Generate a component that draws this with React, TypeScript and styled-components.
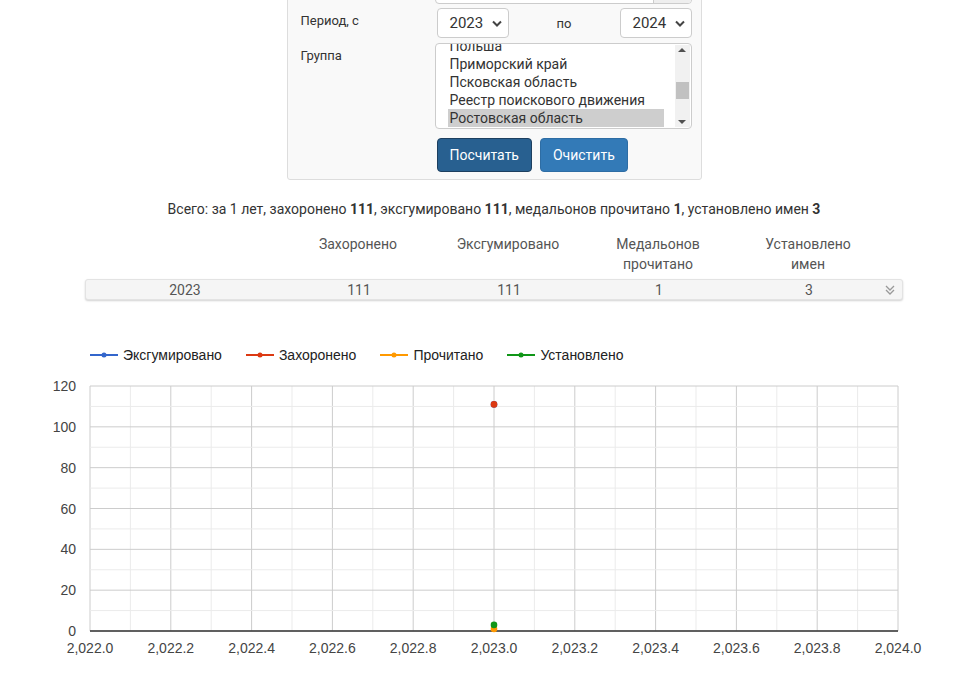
import React from 'react';
import styled, { createGlobalStyle } from 'styled-components';

const GlobalStyle = createGlobalStyle`
  html, body {
    margin: 0;
    padding: 0;
    background: #fff;
    overflow: hidden;
  }
  body {
    font-family: Roboto, "Noto Sans", sans-serif;
    color: #333;
  }
`;

const Page = styled.div`
  width: 818px;
  margin-left: 85px;
  display: flex;
  flex-direction: column;
`;

const Panel = styled.div`
  align-self: center;
  width: 415px;
  box-sizing: border-box;
  margin-top: -43px;
  padding: 10px 9px 7px 13px;
  background: #f9f9f9;
  border: 1px solid #ddd;
  border-radius: 3px;
  display: flex;
  flex-direction: column;
  gap: 4px;
`;

const FormRow = styled.div<{ $gap?: number }>`
  display: grid;
  grid-template-columns: 134px 1fr;
  align-items: start;
  margin-top: ${(p) => p.$gap ?? 0}px;
`;

const Label = styled.div`
  font-size: 13px;
  color: #333;
  padding-top: 5px;
`;

const InputGroup = styled.div`
  display: flex;
  height: 34px;
  border: 1px solid #ccc;
  border-radius: 4px;
  background: #fff;
  overflow: hidden;
`;

const InputField = styled.div`
  flex: 1;
`;

const Addon = styled.div`
  width: 37px;
  background: #eee;
  border-left: 1px solid #ccc;
`;

const PeriodControls = styled.div`
  display: flex;
  align-items: center;
  padding-left: 2px;
`;

const SelectBox = styled.div`
  width: 72px;
  height: 30px;
  box-sizing: border-box;
  border: 1px solid #ccc;
  border-radius: 4px;
  background: #fff;
  display: flex;
  align-items: center;
  justify-content: space-between;
  padding: 0 6px 0 12px;
  font-size: 15px;
  color: #333;
`;

const Po = styled.div`
  flex: 1;
  text-align: center;
  font-size: 13px;
  color: #333;
`;

const ListBox = styled.div`
  height: 86px;
  box-sizing: border-box;
  border: 1px solid #ccc;
  border-radius: 4px;
  background: #fff;
  display: flex;
  overflow: hidden;
`;

const ListItems = styled.div`
  flex: 1;
  padding: 0 11px 0 12px;
  margin-top: -7px;
`;

const ListItem = styled.div<{ $selected?: boolean }>`
  height: 18px;
  line-height: 18px;
  padding-left: 2px;
  font-size: 14px;
  color: #333;
  background: ${(p) => (p.$selected ? '#cecece' : 'transparent')};
`;

const ScrollTrack = styled.div`
  width: 15px;
  margin: 1px 1px 1px 0;
  background: #f1f1f1;
  display: flex;
  flex-direction: column;
  align-items: center;
  justify-content: space-between;
  padding: 3px 0;
  box-sizing: border-box;
`;

const ScrollThumb = styled.div`
  width: 13px;
  height: 17px;
  background: #c1c1c1;
  margin-top: 30px;
`;

const Arrow = styled.div<{ $up?: boolean }>`
  width: 0;
  height: 0;
  border-left: 4px solid transparent;
  border-right: 4px solid transparent;
  ${(p) => (p.$up ? 'border-bottom: 4px solid #505050;' : 'border-top: 4px solid #505050;')}
`;

const Spacer = styled.div`
  flex: 1;
`;

const Buttons = styled.div`
  display: flex;
  gap: 8px;
  margin-top: 5px;
  padding-left: 2px;
`;

const Button = styled.button<{ $active?: boolean }>`
  height: 34px;
  padding: 0 12px;
  font-family: Roboto, "Noto Sans", sans-serif;
  font-size: 14px;
  color: #fff;
  border-radius: 4px;
  border: 1px solid ${(p) => (p.$active ? '#1d3f5f' : '#2e6da4')};
  background: ${(p) => (p.$active ? '#286090' : '#337ab7')};
  cursor: pointer;
`;

const Summary = styled.div`
  margin-top: 20px;
  text-align: center;
  font-size: 14px;
  color: #333;
  line-height: 18px;
`;

const ColumnsGrid = styled.div`
  display: grid;
  grid-template-columns: 198px repeat(4, 150px) 20px;
  align-items: center;
`;

const HeadRow = styled(ColumnsGrid)`
  margin-top: 16px;
  align-items: start;
`;

const HeadCell = styled.div`
  text-align: center;
  font-size: 14px;
  line-height: 20px;
  color: #555;
`;

const DataRow = styled(ColumnsGrid)`
  margin-top: 5px;
  height: 21px;
  box-sizing: border-box;
  background: #f5f5f5;
  border: 1px solid #e3e3e3;
  border-radius: 3px;
  box-shadow: 0 1px 2px rgba(0, 0, 0, 0.18);
`;

const DataCell = styled.div`
  text-align: center;
  font-size: 14px;
  color: #555;
`;

const Expand = styled.div`
  display: flex;
  align-items: center;
  justify-content: flex-start;
`;

const ChartSection = styled.div`
  margin-top: 45px;
  margin-left: -85px;
  width: 956px;
  display: flex;
  flex-direction: column;
`;

const Legend = styled.div`
  display: flex;
  gap: 24px;
  padding-left: 90px;
  height: 20px;
  align-items: center;
`;

const LegendItem = styled.div`
  display: flex;
  align-items: center;
  gap: 5px;
  font-family: "Liberation Sans", Arial, sans-serif;
  font-size: 14px;
  color: #222;
`;

const ChartSvg = styled.svg`
  display: block;
  margin-top: 11px;
`;

const series = [
  { name: 'Эксгумировано', color: '#3366cc' },
  { name: 'Захоронено', color: '#dc3912' },
  { name: 'Прочитано', color: '#ff9900' },
  { name: 'Установлено', color: '#109618' },
];

const groups = ['Польша', 'Приморский край', 'Псковская область', 'Реестр поискового движения', 'Ростовская область'];

// plot geometry (svg coords, svg top = page y 376)
const TOP = 376;
const X0 = 90;
const X1 = 898;
const Y0 = 631 - TOP;
const Y1 = 386 - TOP;
const xPos = (v: number) => X0 + ((v - 2022) / 2) * (X1 - X0);
const yPos = (v: number) => Y0 - (v / 120) * (Y0 - Y1);

const points = [
  { v: 111, color: '#3366cc' },
  { v: 111, color: '#dc3912' },
  { v: 1, color: '#ff9900' },
  { v: 3, color: '#109618' },
];

const Chevron = () => (
  <svg width="10" height="7" viewBox="0 0 10 7">
    <path d="M1 1.5 L5 5.5 L9 1.5" fill="none" stroke="#444" strokeWidth="2" />
  </svg>
);

const DoubleDown = () => (
  <svg width="12" height="12" viewBox="0 0 12 12">
    <path d="M2 2 L6 6 L10 2 M2 6 L6 10 L10 6" fill="none" stroke="#999" strokeWidth="1.3" />
  </svg>
);

const Chart = () => {
  const minorX = Array.from({ length: 21 }, (_, i) => 2022 + i * 0.1);
  const minorY = Array.from({ length: 13 }, (_, i) => i * 10);
  return (
    <ChartSvg width={956} height={290}>
      {minorX.map((v, i) => (
        <line key={'x' + i} x1={xPos(v)} x2={xPos(v)} y1={Y1} y2={Y0} stroke={i % 2 ? '#ebebeb' : '#cccccc'} strokeWidth={1} />
      ))}
      {minorY.map((v, i) => (
        <line key={'y' + i} x1={X0} x2={X1} y1={yPos(v)} y2={yPos(v)} stroke={i % 2 ? '#ebebeb' : '#cccccc'} strokeWidth={1} />
      ))}
      <line x1={X0} x2={X1} y1={Y0} y2={Y0} stroke="#333" strokeWidth={1.5} />
      {[0, 20, 40, 60, 80, 100, 120].map((v) => (
        <text key={v} x={76} y={yPos(v) + 5} textAnchor="end" fontFamily="Liberation Sans, Arial, sans-serif" fontSize={14} fill="#444">
          {v}
        </text>
      ))}
      {Array.from({ length: 11 }, (_, i) => 2022 + i * 0.2).map((v, i) => (
        <text key={i} x={xPos(v)} y={Y0 + 22} textAnchor="middle" fontFamily="Liberation Sans, Arial, sans-serif" fontSize={14} fill="#444">
          {v.toLocaleString('en-US', { minimumFractionDigits: 1, maximumFractionDigits: 1 })}
        </text>
      ))}
      {points.map((p, i) => (
        <circle key={i} cx={xPos(2023)} cy={yPos(p.v)} r={3.3} fill={p.color} />
      ))}
    </ChartSvg>
  );
};

const App = () => {
  return (
    <>
      <GlobalStyle />
      <Page>
        <Panel>
          <FormRow>
            <div />
            <InputGroup>
              <InputField />
              <Addon />
            </InputGroup>
          </FormRow>
          <FormRow>
            <Label>Период, с</Label>
            <PeriodControls>
              <SelectBox>
                2023
                <Chevron />
              </SelectBox>
              <Po>по</Po>
              <SelectBox>
                2024
                <Chevron />
              </SelectBox>
            </PeriodControls>
          </FormRow>
          <FormRow $gap={1}>
            <Label>Группа</Label>
            <ListBox>
              <ListItems>
                {groups.map((g, i) => (
                  <ListItem key={g} $selected={i === groups.length - 1}>
                    {g}
                  </ListItem>
                ))}
              </ListItems>
              <ScrollTrack>
                <Arrow $up />
                <ScrollThumb />
                <Spacer />
                <Arrow />
              </ScrollTrack>
            </ListBox>
          </FormRow>
          <FormRow>
            <div />
            <Buttons>
              <Button $active>Посчитать</Button>
              <Button>Очистить</Button>
            </Buttons>
          </FormRow>
        </Panel>

        <Summary>
          Всего: за 1 лет, захоронено <b>111</b>, эксгумировано <b>111</b>, медальонов прочитано <b>1</b>, установлено имен <b>3</b>
        </Summary>

        <HeadRow>
          <HeadCell />
          <HeadCell>Захоронено</HeadCell>
          <HeadCell>Эксгумировано</HeadCell>
          <HeadCell>
            Медальонов
            <br />
            прочитано
          </HeadCell>
          <HeadCell>
            Установлено
            <br />
            имен
          </HeadCell>
          <HeadCell />
        </HeadRow>
        <DataRow>
          <DataCell>2023</DataCell>
          <DataCell>111</DataCell>
          <DataCell>111</DataCell>
          <DataCell>1</DataCell>
          <DataCell>3</DataCell>
          <Expand>
            <DoubleDown />
          </Expand>
        </DataRow>

        <ChartSection>
          <Legend>
            {series.map((s) => (
              <LegendItem key={s.name}>
                <svg width="28" height="8" viewBox="0 0 28 8">
                  <line x1="0" y1="4" x2="28" y2="4" stroke={s.color} strokeWidth="2" />
                  <circle cx="14" cy="4" r="2.5" fill={s.color} />
                </svg>
                {s.name}
              </LegendItem>
            ))}
          </Legend>
          <Chart />
        </ChartSection>
      </Page>
    </>
  );
};

export default App;
